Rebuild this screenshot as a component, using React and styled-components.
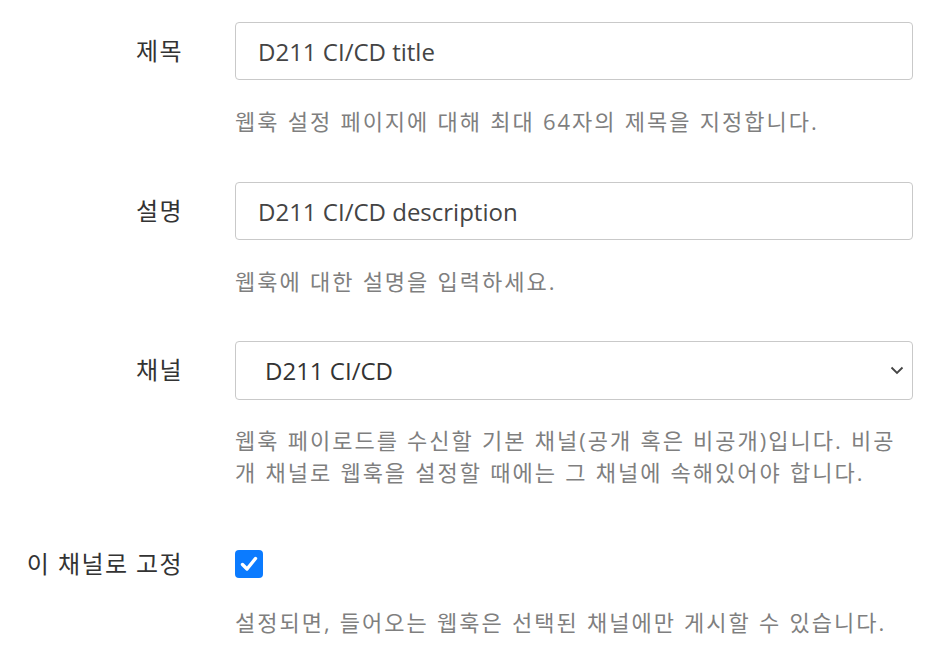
import styled, { createGlobalStyle } from 'styled-components';

const GlobalStyle = createGlobalStyle`
  body {
    margin: 0;
    background: #fff;
    font-family: "Open Sans", "Noto Sans CJK KR", sans-serif;
    color: #3d3c40;
  }
`;

const Form = styled.form`
  padding: 22px 30px 0 0;
  display: flex;
  flex-direction: column;
`;

const Row = styled.div`
  display: grid;
  grid-template-columns: 183px 1fr;
  column-gap: 52px;
  margin-top: ${(p) => p.$gap || 0}px;
`;

const Label = styled.label`
  grid-column: 1;
  text-align: right;
  font-size: 24px;
  letter-spacing: 1.4px;
  line-height: 58px;
  height: 58px;
  color: #333;
  white-space: nowrap;
`;

const Field = styled.div`
  grid-column: 2;
  display: flex;
  flex-direction: column;
`;

const Input = styled.input`
  box-sizing: border-box;
  height: 58px;
  width: 100%;
  padding: 0 22px;
  border: 1px solid #c9c9c9;
  border-radius: 4px;
  font-family: inherit;
  font-size: 24px;
  color: #444;
  background: #fff;
  outline: none;
`;

const SelectWrap = styled.div`
  position: relative;
  height: 59px;
`;

const Select = styled.div`
  box-sizing: border-box;
  height: 59px;
  width: 100%;
  padding: 0 29px;
  border: 1px solid #c9c9c9;
  border-radius: 4px;
  font-size: 24px;
  color: #333;
  display: flex;
  align-items: center;
`;

const Chevron = styled.svg`
  position: absolute;
  right: 9px;
  top: 25px;
`;

const CheckCell = styled.div`
  height: 58px;
  display: flex;
  align-items: center;
`;

const Checkbox = styled.span`
  width: 28px;
  height: 28px;
  border-radius: 4px;
  background: #0b7bff;
  display: flex;
  align-items: center;
  justify-content: center;
`;

const Help = styled.p`
  margin: ${(p) => p.$top || 25}px 0 0;
  font-size: 22px;
  letter-spacing: 2px;
  word-spacing: 0.5px;
  line-height: 32px;
  color: #7f7f7f;
`;

export default function App() {
  return (
    <>
      <GlobalStyle />
      <Form>
        <Row>
          <Label>제목</Label>
          <Field>
            <Input defaultValue="D211 CI/CD title" />
            <Help>웹훅 설정 페이지에 대해 최대 64자의 제목을 지정합니다.</Help>
          </Field>
        </Row>
        <Row $gap={45}>
          <Label>설명</Label>
          <Field>
            <Input defaultValue="D211 CI/CD description" />
            <Help>웹훅에 대한 설명을 입력하세요.</Help>
          </Field>
        </Row>
        <Row $gap={44}>
          <Label>채널</Label>
          <Field>
            <SelectWrap>
              <Select>D211 CI/CD</Select>
              <Chevron width="14" height="9" viewBox="0 0 14 9">
                <path d="M1.5 1.5 L7 7 L12.5 1.5" fill="none" stroke="#444" strokeWidth="1.8" />
              </Chevron>
            </SelectWrap>
            <Help $top={24}>
              웹훅 페이로드를 수신할 기본 채널(공개 혹은 비공개)입니다. 비공개 채널로 웹훅을 설정할 때에는 그 채널에 속해있어야 합니다.
            </Help>
          </Field>
        </Row>
        <Row $gap={47}>
          <Label>이 채널로 고정</Label>
          <Field>
            <CheckCell>
              <Checkbox>
                <svg width="18" height="16" viewBox="0 0 18 16">
                  <path d="M2.5 8.5 L7 13 L15.5 2.5" fill="none" stroke="#fff" strokeWidth="3.4" strokeLinecap="round" strokeLinejoin="round" />
                </svg>
              </Checkbox>
            </CheckCell>
            <Help $top={13}>설정되면, 들어오는 웹훅은 선택된 채널에만 게시할 수 있습니다.</Help>
          </Field>
        </Row>
      </Form>
    </>
  );
}
